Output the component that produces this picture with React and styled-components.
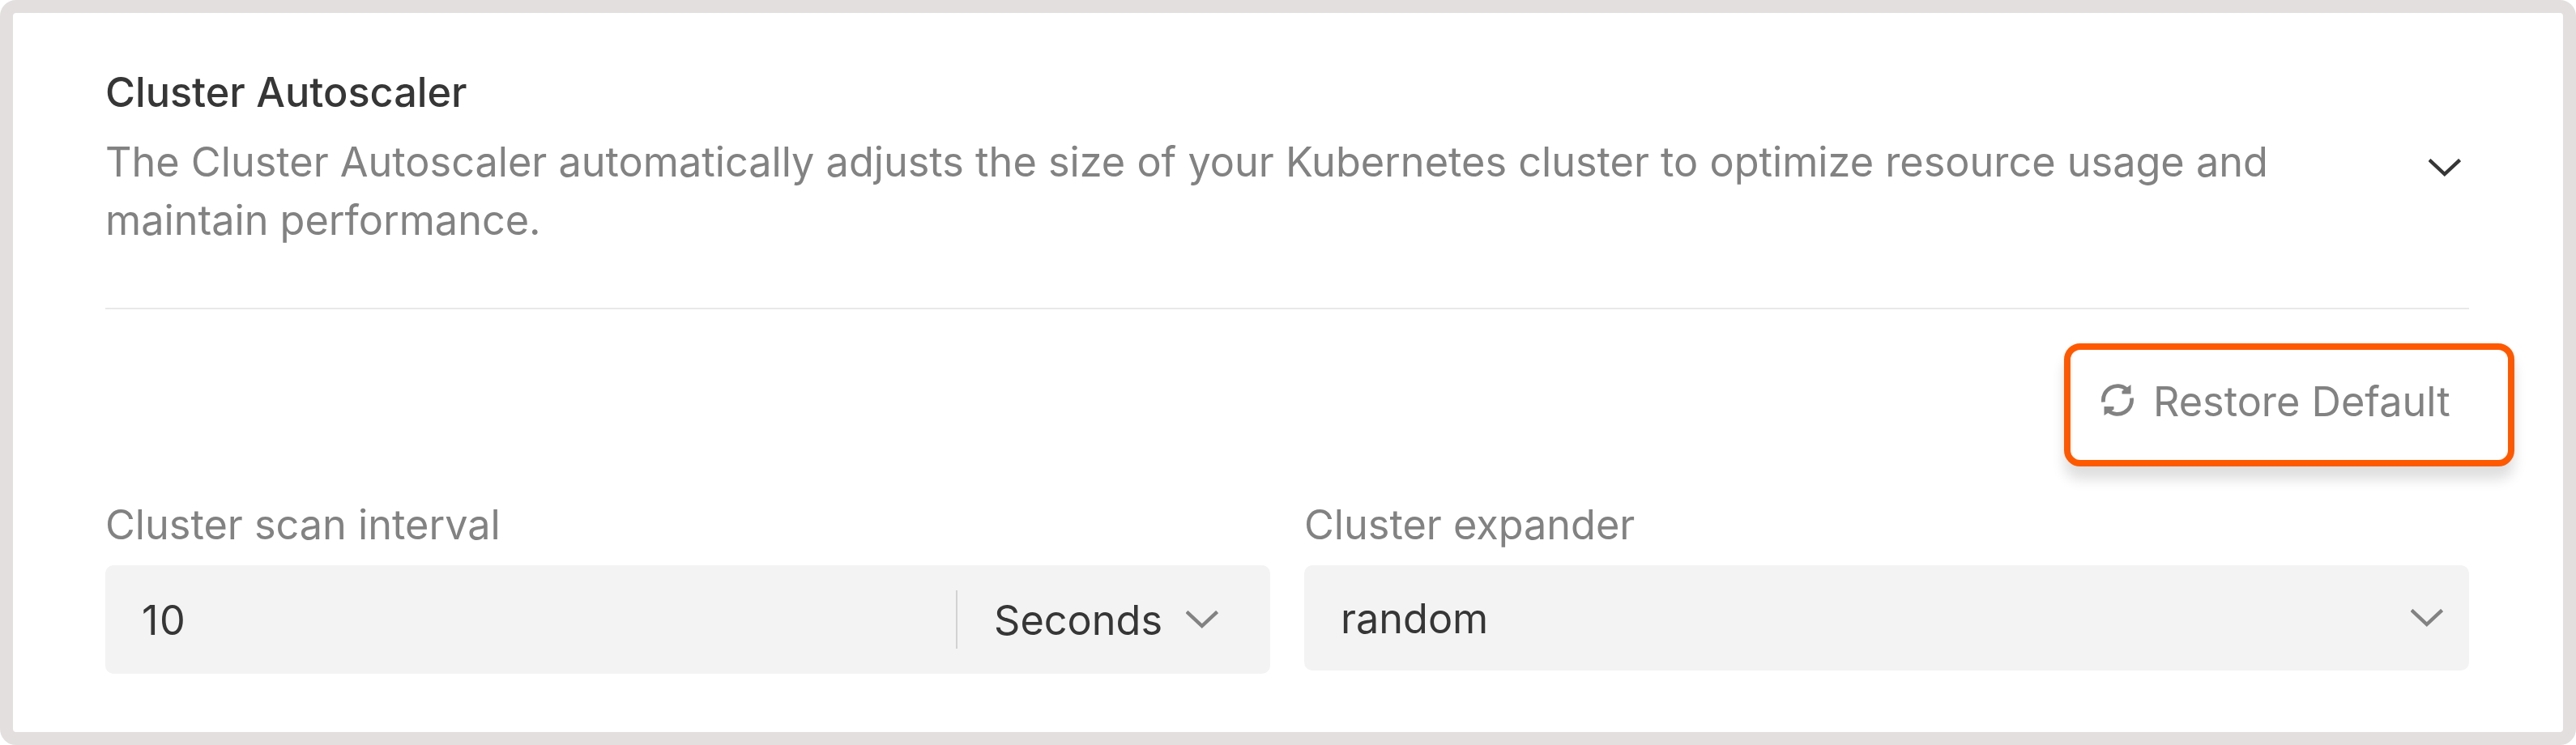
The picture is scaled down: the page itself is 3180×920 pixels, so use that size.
import React from 'react';
import styled, { createGlobalStyle } from 'styled-components';

const Global = createGlobalStyle`
  * { box-sizing: border-box; }
  body { margin: 0; background: #fff; font-family: Inter, sans-serif; }
`;
const Panel = styled.main`
  width: 3180px;
  height: 920px;
  border: 16px solid #e3dfdf;
  border-radius: 20px;
  background: #fff;
  padding: 62px 116px 0 114px;
  font-size: 50.4px;
  line-height: 72px;
  color: #363636;
`;
const Header = styled.header`
  display: flex;
  justify-content: space-between;
  height: 304px;
  padding-right: 10px;
  border-bottom: 2px solid #e8e8e8;
`;
const Title = styled.h1`
  margin: 0 0 14px;
  font-size: inherit;
  font-weight: 500;
`;
const Text = styled.p`
  margin: 0;
  width: 2720px;
  color: #828282;
`;
const HeaderToggle = styled.div`
  padding-top: 118px;
  line-height: 0;
`;
const Actions = styled.div`
  display: flex;
  justify-content: flex-end;
  margin: 42px -56px 0 0;
`;
const RestoreButton = styled.button`
  display: flex;
  align-items: flex-start;
  gap: 24px;
  width: 556px;
  height: 152px;
  padding: 28px 0 0 38px;
  border: 8px solid #ff5900;
  border-radius: 20px;
  background: #fff;
  box-shadow: 0 16px 16px rgba(0, 0, 0, 0.13);
  font: inherit;
  color: #828282;
  text-align: left;
  white-space: nowrap;
`;
const RefreshIcon = styled.svg`
  flex: none;
  width: 40px;
  height: 40px;
  margin-top: 14px;
`;
const Fields = styled.div`
  display: grid;
  grid-template-columns: 1fr 1fr;
  align-items: start;
  gap: 42px;
  margin-top: 36px;
`;
const Label = styled.div`
  height: 86px;
  color: #828282;
`;
const Control = styled.div`
  display: flex;
  align-items: center;
  justify-content: space-between;
  height: ${p => p.$height}px;
  padding: 0 ${p => p.$end}px 0 45px;
  border-radius: 10px;
  background: #f3f3f3;
`;
const Value = styled.span`
  padding-top: 2px;
  letter-spacing: ${p => p.$spacing || 0}px;
`;
const Unit = styled.div`
  display: flex;
  align-items: center;
  gap: 29px;
  height: 72px;
  padding-left: 45px;
  border-left: 2px solid #d2d2d2;
`;
const ChevronSvg = styled.svg`
  flex: none;
  width: 40px;
  height: 22px;
  fill: none;
  stroke: ${p => p.$color};
  stroke-width: 4.4;
`;
const Chevron = ({ color = '#828282' }) => (
  <ChevronSvg $color={color} viewBox="0 0 40 22"><path d="M1 1.5 19.8 19 38.6 1.5" /></ChevronSvg>
);

export default function App() {
  return (
    <>
      <Global />
      <Panel>
        <Header>
          <div>
            <Title>Cluster Autoscaler</Title>
            <Text>The Cluster Autoscaler automatically adjusts the size of your Kubernetes cluster to optimize resource usage and maintain performance.</Text>
          </div>
          <HeaderToggle><Chevron color="#363636" /></HeaderToggle>
        </Header>
        <Actions>
          <RestoreButton>
            <RefreshIcon viewBox="0 0 40 40" fill="none" stroke="#828282" strokeWidth="4.8">
              <path d="M2.6 22.5A17.5 17.5 0 0 1 31 6.5" />
              <path d="M37.4 17.5A17.5 17.5 0 0 1 9 33.5" />
              <path d="M36.5 1v11.5h-11V9zM3.5 39V28h12v3.5z" fill="#828282" stroke="none" />
            </RefreshIcon>
            Restore Default
          </RestoreButton>
        </Actions>
        <Fields>
          <div>
            <Label>Cluster scan interval</Label>
            <Control $height={134} $end={64}>
              <Value $spacing={1.5}>10</Value>
              <Unit><Value>Seconds</Value><Chevron /></Unit>
            </Control>
          </div>
          <div>
            <Label>Cluster expander</Label>
            <Control $height={130} $end={32}>
              <Value>random</Value>
              <Chevron />
            </Control>
          </div>
        </Fields>
      </Panel>
    </>
  );
}
